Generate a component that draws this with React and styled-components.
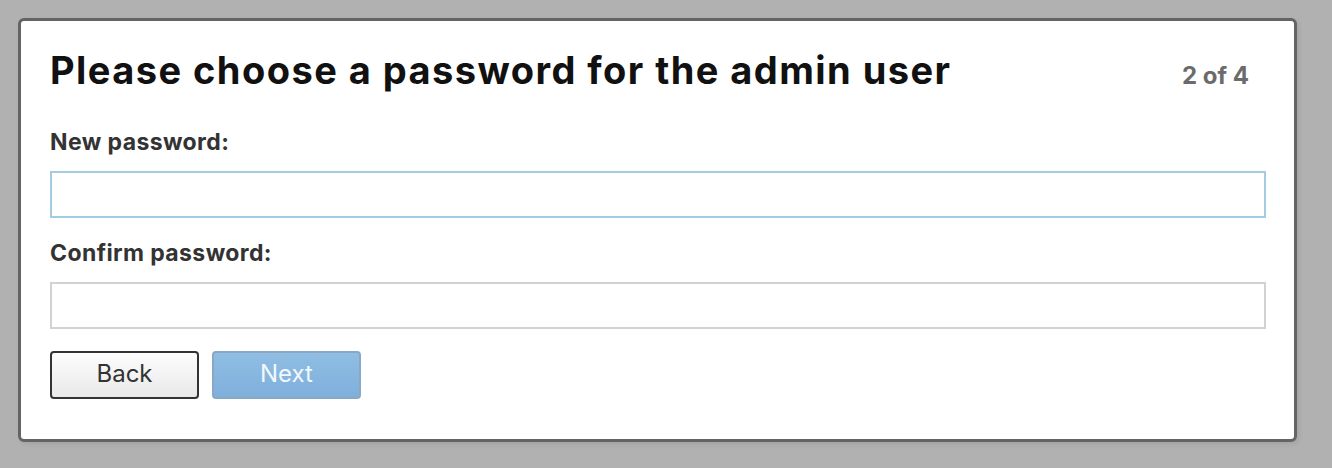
import styled, { createGlobalStyle } from "styled-components";

const Global = createGlobalStyle`
  html, body {
    margin: 0;
    padding: 0;
    background: #b1b1b1;
  }
  body {
    font-family: Inter, "Open Sans", "Liberation Sans", sans-serif;
  }
`

const Page = styled.div`
  padding: 18px 35px 18px 18px;
  height: 468px;
  box-sizing: border-box;
`

const Card = styled.div`
  width: 1279px;
  height: 424px;
  box-sizing: border-box;
  background: #fff;
  border: 3px solid #646464;
  border-radius: 6px;
  padding: 24px 28px 0 29px;
  box-shadow: 2px 2px 4px rgba(0,0,0,0.08);
`

const Header = styled.div`
  display: flex;
  align-items: baseline;
  justify-content: space-between;
  padding-right: 17px;
  h1 {
    margin: 0;
    font-size: 38px;
    line-height: 50px;
    letter-spacing: 1.45px;
    font-weight: 700;
    color: #111;
  }
  span {
    font-size: 24px;
    font-weight: 700;
    color: #6b6b6b;
  }
`

const Label = styled.label`
  display: block;
  font-size: 23px;
  line-height: 28px;
  letter-spacing: 0.4px;
  font-weight: 700;
  color: #333;
  margin: ${p => p.$top}px 0 15px;
`

const Input = styled.input`
  display: block;
  width: 100%;
  height: 47px;
  box-sizing: border-box;
  border: 2px solid ${p => (p.$focus ? "#a3cbe2" : "#d2d2d2")};
  background: #fff;
  outline: none;
  font-size: 18px;
`

const Buttons = styled.div`
  display: flex;
  gap: 13px;
  margin-top: 22px;
`

const Button = styled.button`
  width: 149px;
  height: 48px;
  box-sizing: border-box;
  padding: 0 0 4px;
  border-radius: 4px;
  font-family: inherit;
  font-size: 24px;
  font-weight: 400;
  border: 2px solid ${p => (p.$primary ? "#8aa8c4" : "#333")};
  color: ${p => (p.$primary ? "#f2f8fc" : "#333")};
  background: ${p =>
    p.$primary
      ? "linear-gradient(#8fbde3, #7fb0dc)"
      : "linear-gradient(#fdfdfd, #e9e9e9)"};
`

export default function App() {
  return (
    <Page>
      <Global />
      <Card>
        <Header>
          <h1>Please choose a password for the admin user</h1>
          <span>2 of 4</span>
        </Header>
        <Label $top={33}>New password:</Label>
        <Input type="password" $focus />
        <Label $top={21}>Confirm password:</Label>
        <Input type="password" />
        <Buttons>
          <Button>Back</Button>
          <Button $primary>Next</Button>
        </Buttons>
      </Card>
    </Page>
  )
}
